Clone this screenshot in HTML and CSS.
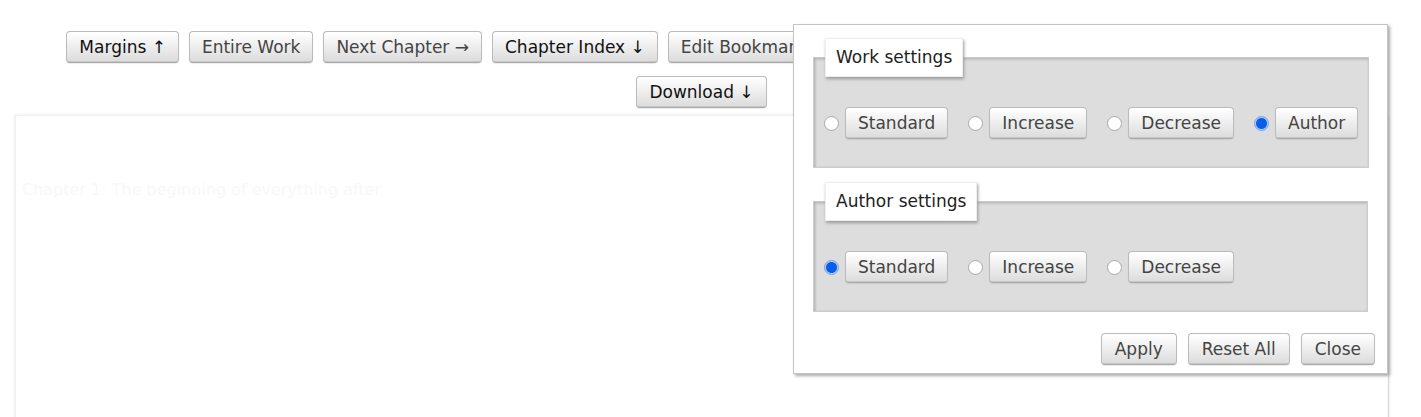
FILE: index.html
```html
<!DOCTYPE html>
<html lang="en">
<head>
  <meta charset="UTF-8">
  <title>Chapter 1 - Work</title>
  <link rel="stylesheet" href="styles.css">
</head>
<body>
  <ul class="work-nav">
    <li><button class="toggle">Margins ↑</button></li>
    <li><button>Entire Work</button></li>
    <li><button>Next Chapter →</button></li>
    <li><button class="toggle">Chapter Index ↓</button></li>
    <li><button>Edit Bookmark</button></li>
    <!-- these sit under the open dialog -->
    <li class="covered"><button>Comments (2)</button></li>
    <li class="covered"><button>Share</button></li>
    <li class="covered"><button>Subscribe</button></li>
    <li class="covered"><button>Mark for Later</button></li>
    <li><button class="toggle">Download ↓</button></li>
  </ul>

  <div class="work-card">
    <p class="faint">Chapter 1: The beginning of everything after</p>
  </div>

  <div class="dialog">
    <fieldset>
      <legend>Work settings</legend>
      <div class="options">
        <label><input type="radio" name="work"><button>Standard</button></label>
        <label><input type="radio" name="work"><button>Increase</button></label>
        <label><input type="radio" name="work"><button>Decrease</button></label>
        <label><input type="radio" name="work" checked><button>Author</button></label>
      </div>
    </fieldset>
    <fieldset>
      <legend>Author settings</legend>
      <div class="options">
        <label><input type="radio" name="author" checked><button>Standard</button></label>
        <label><input type="radio" name="author"><button>Increase</button></label>
        <label><input type="radio" name="author"><button>Decrease</button></label>
      </div>
    </fieldset>
    <div class="actions">
      <button>Apply</button>
      <button>Reset All</button>
      <button>Close</button>
    </div>
  </div>
</body>
</html>
```

FILE: styles.css
```css
body {
  margin: 0;
  background: #fff;
  color: #2a2a2a;
  font-family: "DejaVu Sans", "Lucida Grande", sans-serif;
}

button {
  font-family: "DejaVu Sans", "Lucida Grande", sans-serif;
  font-size: 17px;
  line-height: 20px;
  color: #444;
  background: #eee;
  background-image: linear-gradient(#fff 2%, #ddd 95%, #bbb 100%);
  border: 1px solid #bbb;
  border-bottom-color: #aaa;
  border-radius: 4px;
  padding: 5px 12px;
  box-shadow: 0 1px 1px rgba(0, 0, 0, 0.08);
  cursor: pointer;
}
button.toggle {
  color: #111;
}

.work-nav {
  list-style: none;
  margin: 0 0 0 15px;
  padding: 31px 0 0;
  width: 1373px;
  display: flex;
  flex-wrap: wrap;
  justify-content: center;
  column-gap: 10px;
  row-gap: 13px;
}
.work-nav .covered {
  visibility: hidden;
}

.work-card {
  margin: 7px 0 0 15px;
  width: 1372px;
  height: 320px;
  border: 1px solid #f0f0f0;
  border-right-color: #d6d6d6;
  box-shadow: 0 0 3px #e4e4e4;
  background: #fff;
}
.faint {
  margin: 64px 0 0 6px;
  font-size: 16px;
  color: #f8f8f8;
}

.dialog {
  position: absolute;
  left: 793px;
  top: 24px;
  width: 555px;
  padding: 13px 19px 8px 19px;
  background: #fff;
  border: 1px solid #c4c4c4;
  box-shadow: 2px 2px 3px #aaa;
}

fieldset {
  margin: 0 0 14px;
  padding: 30px 10px 28px 10px;
  background: #ddd;
  border: 1px solid #ccc;
  box-shadow: inset 1px 1px 3px #aaa;
}

legend {
  margin-left: 1px;
  padding: 8px 10px;
  font-size: 17px;
  line-height: 21px;
  color: #222;
  background: #fff;
  border: 1px solid #eee;
  box-shadow: 1px 2px 3px #999;
}

.options {
  display: flex;
  column-gap: 20px;
}
.options label {
  display: flex;
  align-items: center;
  gap: 6px;
}

input[type="radio"] {
  appearance: none;
  margin: 0;
  width: 15px;
  height: 15px;
  border-radius: 50%;
  border: 1px solid #a8a8a8;
  background: #fff;
}
input[type="radio"]:checked {
  border-color: #6e9ff0;
  background: radial-gradient(circle, #0a5de6 0, #0a5de6 5px, #b8d0f8 6px);
}

.actions {
  display: flex;
  justify-content: flex-end;
  gap: 11px;
  margin-top: 21px;
  margin-right: -7px;
}
.actions button {
  padding: 5px 13px;
}
```
